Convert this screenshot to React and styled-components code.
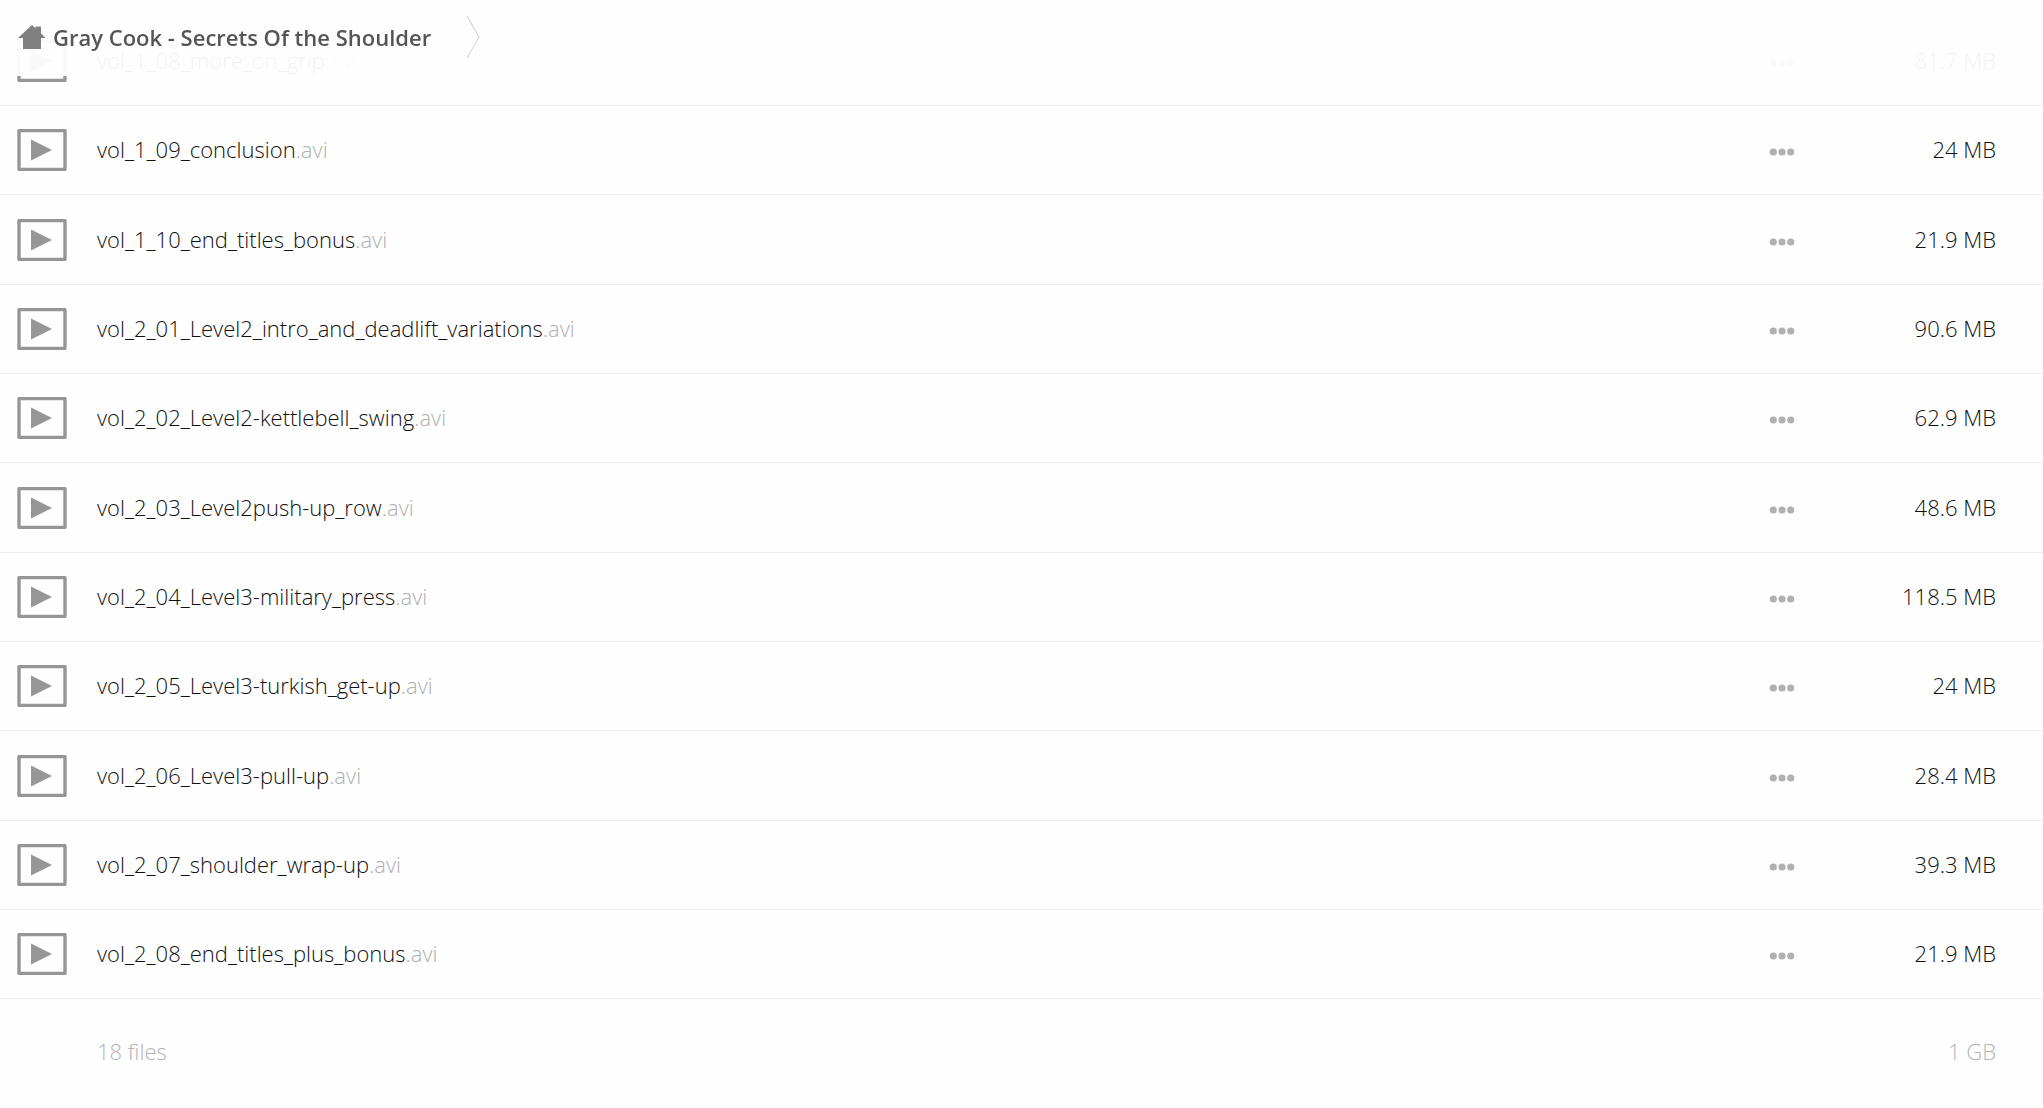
import React from 'react';
import styled, { createGlobalStyle } from 'styled-components';

const GlobalStyle = createGlobalStyle`
  * {
    box-sizing: border-box;
  }

  body {
    margin: 0;
    background-color: #fefefe;
    color: #111;
    font-family: 'Open Sans', 'Liberation Sans', sans-serif;
    font-size: 22px;
    font-weight: 300;
    line-height: 30px;
  }
`;

const Header = styled.header`
  position: fixed;
  top: 0;
  left: 0;
  right: 0;
  z-index: 10;
  display: flex;
  align-items: center;
  height: 76px;
  padding: 0 18px 2px;
  background-color: rgba(254, 254, 254, 0.95);
`;

const Crumb = styled.a`
  display: flex;
  align-items: center;
  gap: 8px;
  color: #555;
  font-weight: 600;
  text-decoration: none;
`;

const HomeIcon = styled.svg`
  width: 27px;
  height: 24px;
  fill: #808080;
`;

const Separator = styled.svg`
  width: 14px;
  height: 42px;
  margin-left: 35px;
  fill: none;
  stroke: #ccc;
`;

const FileTable = styled.table`
  width: 100%;
  margin-top: 16px;
  border-collapse: separate;
  border-spacing: 0;
  border-top: 1px solid #ebebeb;
  table-layout: fixed;
`;

const Column = styled.col`
  width: ${({ $width }) => $width};
`;

const FileRow = styled.tr`
  height: 89px;

  &:nth-child(3n) {
    height: 90px;
  }

  td {
    border-bottom: 1px solid #ebebeb;
  }
`;

const SummaryRow = styled.tr`
  height: 106px;
  color: #b4b4b4;
`;

const IconCell = styled.td`
  padding: 0 0 0 17px;
`;

const NameCell = styled.td`
  padding: 0 0 2px;
  overflow: hidden;
  text-overflow: ellipsis;
  white-space: nowrap;
`;

const MenuCell = styled.td`
  padding: 4px 0 0;
`;

const SizeCell = styled.td`
  padding: 0 47px 2px 0;
  text-align: right;
  white-space: nowrap;
`;

const VideoIcon = styled.svg`
  display: block;
  width: 50px;
  height: 42px;
`;

const FileLink = styled.a`
  color: inherit;
  text-decoration: none;
`;

const Extension = styled.span`
  color: #b0b0b0;
`;

const MenuButton = styled.button`
  display: block;
  padding: 8px;
  border: none;
  background: none;
  cursor: pointer;

  svg {
    display: block;
    width: 26px;
    height: 8px;
    fill: #b0b0b0;
  }
`;

const files = [
  { name: 'vol_1_08_more_on_grip', size: '81.7 MB' },
  { name: 'vol_1_09_conclusion', size: '24 MB' },
  { name: 'vol_1_10_end_titles_bonus', size: '21.9 MB' },
  { name: 'vol_2_01_Level2_intro_and_deadlift_variations', size: '90.6 MB' },
  { name: 'vol_2_02_Level2-kettlebell_swing', size: '62.9 MB' },
  { name: 'vol_2_03_Level2push-up_row', size: '48.6 MB' },
  { name: 'vol_2_04_Level3-military_press', size: '118.5 MB' },
  { name: 'vol_2_05_Level3-turkish_get-up', size: '24 MB' },
  { name: 'vol_2_06_Level3-pull-up', size: '28.4 MB' },
  { name: 'vol_2_07_shoulder_wrap-up', size: '39.3 MB' },
  { name: 'vol_2_08_end_titles_plus_bonus', size: '21.9 MB' }
];

const File = ({ name, size }) => (
  <FileRow>
    <IconCell>
      <VideoIcon viewBox="0 0 50 42" aria-hidden="true">
        <rect x="2" y="1.5" width="46" height="39" rx="0.5" fill="none" stroke="#969696" strokeWidth="3.4" />
        <path d="M14 10.5 35 21 14 31.5Z" fill="#969696" />
      </VideoIcon>
    </IconCell>
    <NameCell>
      <FileLink href={`#${name}`}>
        {name}
        <Extension>.avi</Extension>
      </FileLink>
    </NameCell>
    <MenuCell>
      <MenuButton type="button" aria-label={`Actions for ${name}`}>
        <svg viewBox="0 0 26 8" aria-hidden="true">
          <circle cx="4.3" cy="4" r="3.6" />
          <circle cx="13" cy="4" r="3.6" />
          <circle cx="21.7" cy="4" r="3.6" />
        </svg>
      </MenuButton>
    </MenuCell>
    <SizeCell>{size}</SizeCell>
  </FileRow>
);

const App = () => {
  return (
    <>
      <GlobalStyle />
      <Header>
        <Crumb href="#">
          <HomeIcon viewBox="0 0 27 24" aria-hidden="true">
            <path d="M0 13 14 0 17.5 3.2V1.5H23V8.3L27.5 13H23V24H5V13Z" />
          </HomeIcon>
          Gray Cook - Secrets Of the Shoulder
        </Crumb>
        <Separator viewBox="0 0 14 42" aria-hidden="true">
          <path d="M1 0 13 21 1 42" />
        </Separator>
      </Header>
      <main>
        <FileTable>
          <colgroup>
            <Column $width="97px" />
            <Column $width="auto" />
            <Column $width="60px" />
            <Column $width="222px" />
          </colgroup>
          <tbody>
            {files.map((file) => (
              <File key={file.name} {...file} />
            ))}
          </tbody>
          <tfoot>
            <SummaryRow>
              <IconCell />
              <NameCell>18 files</NameCell>
              <MenuCell />
              <SizeCell>1 GB</SizeCell>
            </SummaryRow>
          </tfoot>
        </FileTable>
      </main>
    </>
  );
};

export default App;
